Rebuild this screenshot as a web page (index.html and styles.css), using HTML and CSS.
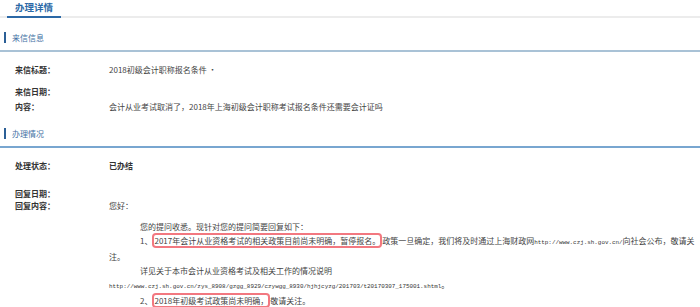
FILE: index.html
```html
<!DOCTYPE html>
<html lang="zh-CN">
<head>
  <meta charset="UTF-8" />
  <meta name="viewport" content="width=device-width, initial-scale=1.0" />
  <title>办理详情</title>
  <link rel="stylesheet" href="styles.css">
</head>
<body>
  <!-- Tab -->
  <div class="tabs">
    <span class="tab active">办理详情</span>
  </div>

  <!-- 来信信息 -->
  <div class="section-title">来信信息</div>
  <div class="fields">
    <div class="field">
      <span class="label">来信标题：</span>
      <span class="value">2018初级会计职称报名条件 ·</span>
    </div>
    <div class="field gap-8">
      <span class="label">来信日期：</span>
      <span class="value"></span>
    </div>
    <div class="field gap-1">
      <span class="label">内容：</span>
      <span class="value">会计从业考试取消了，2018年上海初级会计职称考试报名条件还需要会计证吗</span>
    </div>
  </div>

  <!-- 办理情况 -->
  <div class="section-title blue">办理情况</div>
  <div class="fields">
    <div class="field">
      <span class="label">处理状态：</span>
      <span class="value strong">已办结</span>
    </div>
    <div class="field gap-14">
      <span class="label">回复日期：</span>
      <span class="value"></span>
    </div>
    <div class="field gap-n2">
      <span class="label">回复内容：</span>
      <div class="value reply">
        <p class="greeting">您好：</p>
        <p class="indent">您的提问收悉。现针对您的提问简要回复如下：</p>
        <p class="indent">1、<span class="mark">2017年会计从业资格考试的相关政策目前尚未明确，暂停报名。</span>政策一旦确定，我们将及时通过上海财政网<span class="mono">http://www.czj.sh.gov.cn/</span>向社会公布，敬请关注。</p>
        <p class="indent">详见关于本市会计从业资格考试及相关工作的情况说明</p>
        <p><span class="mono">http://www.czj.sh.gov.cn/zys_8908/gzgg_8929/czywgg_8930/hjhjcyzg/201703/t20170307_175001.shtml</span>。</p>
        <p class="indent">2、<span class="mark">2018年初级考试政策尚未明确，</span>敬请关注。</p>
      </div>
    </div>
  </div>
</body>
</html>
```

FILE: styles.css
```css
html, body {
  margin: 0;
  background: #fff;
  font-family: "Noto Sans CJK SC", sans-serif;
  font-size: 8px;
  color: #444;
  overflow: hidden;
}

/* Tab */
.tabs {
  display: flex;
  height: 16px;
  padding-left: 7px;
  border-bottom: 2px solid #ececec;
}

.tab {
  height: 16px;
  padding: 0 8px;
  box-sizing: border-box;
  font-size: 9.5px;
  font-weight: bold;
  line-height: 14px;
  color: #2b68a6;
}

.tab.active {
  height: 18px;
  border-bottom: 2px solid #2b68a6;
}

/* Abschnittstitel */
.section-title {
  display: flex;
  align-items: center;
  gap: 6px;
  margin-top: 14px;
  padding: 0 0 7px 4px;
  line-height: 11px;
  color: #3f70a4;
  border-bottom: 2px solid #a9c2d6;
}

.section-title::before {
  content: "";
  width: 2px;
  height: 11px;
  background: #2b5f96;
}

.section-title.blue {
  border-bottom-color: #78a6d0;
}

/* Felder */
.fields {
  padding: 11px 0 0 15px;
}

.field {
  display: flex;
  line-height: 14px;
}

.gap-1 { margin-top: 1px; }
.gap-8 { margin-top: 8px; }
.gap-14 { margin-top: 14px; }
.gap-n2 { margin-top: -2px; }

.label {
  flex: none;
  width: 94px;
  font-weight: bold;
  color: #333;
}

.value {
  flex: 1;
  min-width: 0;
}

.strong {
  font-weight: bold;
  color: #333;
}

/* Antwort */
.reply p {
  margin: 0;
}

.reply .greeting {
  margin-bottom: 7px;
}

.reply .indent {
  text-indent: 31px;
}

/* rote Markierung */
.mark {
  margin: 0 2px;
  border-radius: 2px;
  box-shadow: 0 0 0 2px #f27880;
}

.mono {
  font-family: "Liberation Mono", monospace;
  font-size: 5.9px;
  color: #333;
}
```
